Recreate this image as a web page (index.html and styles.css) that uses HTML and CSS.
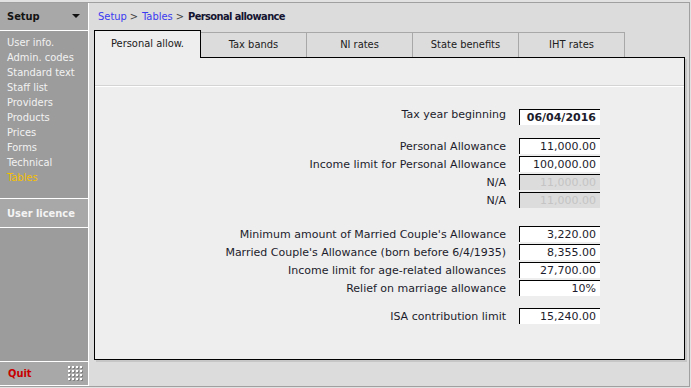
FILE: index.html
```html
<!DOCTYPE html>
<html lang="en">
<head>
    <meta charset="UTF-8">
    <title>Setup - Personal allowance</title>
    <link rel="stylesheet" href="styles.css">
</head>
<body>
    <div class="app">
        <!-- Left menu -->
        <div class="sidebar">
            <div class="side-head">
                <span>Setup</span>
                <svg class="caret" width="8" height="5" viewBox="0 0 8 5"><polygon points="0,0 8,0 4,4" fill="#111"/></svg>
            </div>
            <ul class="side-menu">
                <li>User info.</li>
                <li>Admin. codes</li>
                <li>Standard text</li>
                <li>Staff list</li>
                <li>Providers</li>
                <li>Products</li>
                <li>Prices</li>
                <li>Forms</li>
                <li>Technical</li>
                <li class="current">Tables</li>
            </ul>
            <div class="side-section">User licence</div>
            <div class="side-fill"></div>
            <div class="side-foot">
                <span class="quit">Quit</span>
                <svg class="grip" width="16" height="16" viewBox="0 0 16 16">
                    <g fill="#808080">
                        <rect x="1" y="1" width="2" height="2"/><rect x="5" y="1" width="2" height="2"/><rect x="9" y="1" width="2" height="2"/><rect x="13" y="1" width="2" height="2"/>
                        <rect x="1" y="5" width="2" height="2"/><rect x="5" y="5" width="2" height="2"/><rect x="9" y="5" width="2" height="2"/><rect x="13" y="5" width="2" height="2"/>
                        <rect x="1" y="9" width="2" height="2"/><rect x="5" y="9" width="2" height="2"/><rect x="9" y="9" width="2" height="2"/><rect x="13" y="9" width="2" height="2"/>
                        <rect x="1" y="13" width="2" height="2"/><rect x="5" y="13" width="2" height="2"/><rect x="9" y="13" width="2" height="2"/><rect x="13" y="13" width="2" height="2"/>
                    </g>
                    <g fill="#ffffff">
                        <rect x="0" y="0" width="2" height="2"/><rect x="4" y="0" width="2" height="2"/><rect x="8" y="0" width="2" height="2"/><rect x="12" y="0" width="2" height="2"/>
                        <rect x="0" y="4" width="2" height="2"/><rect x="4" y="4" width="2" height="2"/><rect x="8" y="4" width="2" height="2"/><rect x="12" y="4" width="2" height="2"/>
                        <rect x="0" y="8" width="2" height="2"/><rect x="4" y="8" width="2" height="2"/><rect x="8" y="8" width="2" height="2"/><rect x="12" y="8" width="2" height="2"/>
                        <rect x="0" y="12" width="2" height="2"/><rect x="4" y="12" width="2" height="2"/><rect x="8" y="12" width="2" height="2"/><rect x="12" y="12" width="2" height="2"/>
                    </g>
                </svg>
            </div>
        </div>

        <!-- Main area -->
        <div class="content">
            <div class="crumbs">
                <a href="#">Setup</a><span class="sep">&gt;</span><a href="#">Tables</a><span class="sep">&gt;</span><b>Personal allowance</b>
            </div>

            <div class="tabs">
                <div class="tab active">Personal allow.</div>
                <div class="tab">Tax bands</div>
                <div class="tab">NI rates</div>
                <div class="tab">State benefits</div>
                <div class="tab">IHT rates</div>
            </div>

            <div class="panel">
                <div class="panel-bar"></div>

                <div class="form">
                    <div class="group">
                        <div class="row first">
                            <label>Tax year beginning</label>
                            <input type="text" class="field bold" value="06/04/2016">
                        </div>
                    </div>

                    <div class="group">
                        <div class="row">
                            <label>Personal Allowance</label>
                            <input type="text" class="field" value="11,000.00">
                        </div>
                        <div class="row">
                            <label>Income limit for Personal Allowance</label>
                            <input type="text" class="field" value="100,000.00">
                        </div>
                        <div class="row">
                            <label>N/A</label>
                            <input type="text" class="field" value="11,000.00" disabled>
                        </div>
                        <div class="row">
                            <label>N/A</label>
                            <input type="text" class="field" value="11,000.00" disabled>
                        </div>
                    </div>

                    <div class="group married">
                        <div class="row">
                            <label>Minimum amount of Married Couple's Allowance</label>
                            <input type="text" class="field" value="3,220.00">
                        </div>
                        <div class="row">
                            <label>Married Couple's Allowance (born before 6/4/1935)</label>
                            <input type="text" class="field" value="8,355.00">
                        </div>
                        <div class="row">
                            <label>Income limit for age-related allowances</label>
                            <input type="text" class="field" value="27,700.00">
                        </div>
                        <div class="row">
                            <label>Relief on marriage allowance</label>
                            <input type="text" class="field" value="10%">
                        </div>
                    </div>

                    <div class="group isa">
                        <div class="row">
                            <label>ISA contribution limit</label>
                            <input type="text" class="field" value="15,240.00">
                        </div>
                    </div>
                </div>
            </div>
        </div>
    </div>
</body>
</html>
```

FILE: styles.css
```css
body {
    margin: 0;
    padding-top: 2px;
    background-color: #e2e2e2;
    font-family: "DejaVu Sans Condensed", "DejaVu Sans", sans-serif;
    font-size: 11px;
    color: #1c1c2c;
}
.app {
    display: flex;
    width: 689px;
    height: 383px;
    border-top: 1px solid #a0a0a0;
    border-right: 1px solid #a0a0a0;
    border-bottom: 1px solid #a0a0a0;
}

/* sidebar */
.sidebar {
    width: 88px;
    border-right: 1px solid #ffffff;
    display: flex;
    flex-direction: column;
    background-color: #9c9c9c;
}
.side-head {
    height: 27px;
    display: flex;
    align-items: center;
    justify-content: space-between;
    padding: 0 8px 0 7px;
    background-color: #a8a8a8;
    border-bottom: 1px solid #ffffff;
    font-weight: bold;
    color: #141414;
}
.side-menu {
    list-style: none;
    margin: 0;
    padding: 4px 0 13px 7px;
    line-height: 15px;
    color: #f2f2f2;
    border-bottom: 1px solid #ffffff;
}
.side-menu .current {
    color: #f5c000;
}
.side-section {
    height: 28px;
    display: flex;
    align-items: center;
    padding-left: 7px;
    background-color: #a8a8a8;
    border-bottom: 1px solid #ffffff;
    font-weight: bold;
    color: #f4f4f4;
}
.side-fill {
    flex: 1;
    border-bottom: 1px solid #ffffff;
}
.side-foot {
    height: 23px;
    display: flex;
    align-items: center;
    justify-content: space-between;
    padding: 0 4px 0 8px;
    background-color: #a8a8a8;
    border-bottom: 1px solid #ffffff;
}
.quit {
    color: #c80000;
    font-weight: bold;
}

/* main */
.content {
    flex: 1;
    background-color: #dcdcdc;
    padding-left: 5px;
}
.crumbs {
    height: 26px;
    display: flex;
    align-items: center;
    padding-left: 4px;
    color: #444;
}
.crumbs a {
    color: #3a3af0;
    text-decoration: none;
}
.crumbs .sep {
    margin: 0 4px 0 3px;
}
.crumbs b {
    color: #141430;
    letter-spacing: -0.6px;
}
.tabs {
    display: flex;
    align-items: flex-end;
    height: 28px;
}
.tab {
    width: 105px;
    height: 24px;
    line-height: 24px;
    text-align: center;
    border: 1px solid #a8a8a8;
    border-bottom: none;
    margin-left: -1px;
    background-color: #dcdcdc;
    color: #202020;
}
.tab.active {
    margin-left: 0;
    height: 27px;
    line-height: 26px;
    margin-bottom: -1px;
    border-color: #000000;
    background-color: #eeeeee;
    position: relative;
    z-index: 1;
}
.panel {
    height: 301px;
    margin-right: 4px;
    border: 1px solid #000000;
    background-color: #eeeeee;
    box-shadow: 2px 2px 0 #c6c6c6;
}
.panel-bar {
    height: 27px;
    border-bottom: 1px solid #d4d4d4;
    box-shadow: 0 1px 0 #ffffff;
}

/* form rows */
.form {
    padding-top: 22px;
    font-family: "DejaVu Sans", sans-serif;
}
.group {
    margin-top: 11px;
}
.group:first-child {
    margin-top: 0;
}
.group.married {
    margin-top: 16px;
}
.group.isa {
    margin-top: 10px;
}
.row {
    display: grid;
    grid-template-columns: 411px 81px;
    column-gap: 13px;
    align-items: center;
    height: 18px;
}
.row label {
    text-align: right;
}
.row.first label {
    align-self: start;
}
.field {
    box-sizing: border-box;
    width: 81px;
    height: 16px;
    margin: 0;
    padding: 0 4px 0 0;
    border: none;
    border-top: 1px solid #000000;
    border-left: 1px solid #000000;
    background-color: #ffffff;
    font-family: inherit;
    font-size: 11px;
    color: #1c1c2c;
    text-align: right;
    outline: none;
}
.field.bold {
    font-weight: bold;
}
.field:disabled {
    background-color: #dcdcdc;
    color: #c4c4c4;
}
```
